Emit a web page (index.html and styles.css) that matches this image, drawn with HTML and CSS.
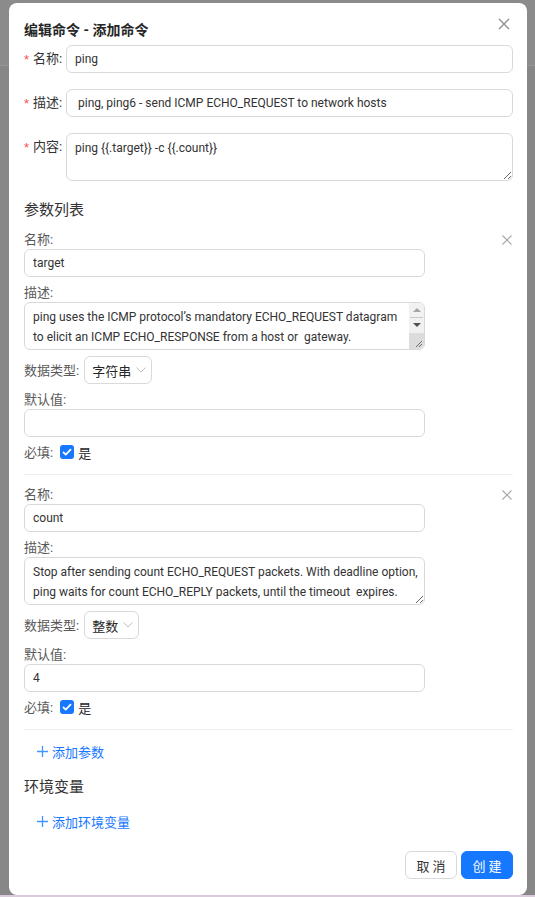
FILE: index.html
```html
<!DOCTYPE html>
<html lang="zh-CN">
<head>
<meta charset="utf-8">
<title>编辑命令 - 添加命令</title>
<link rel="stylesheet" href="styles.css">
</head>
<body>
<div class="modal">
  <button class="modal-close" aria-label="关闭">
    <svg width="12" height="12" viewBox="0 0 12 12"><path d="M1 1L11 11M11 1L1 11" stroke="#8c8c8c" stroke-width="1.3" fill="none"/></svg>
  </button>
  <div class="modal-title">编辑命令 - 添加命令</div>

  <div class="top-form">
    <label class="top-label"><span class="req">*</span>名称:</label>
    <input class="input" value="ping">
    <label class="top-label"><span class="req">*</span>描述:</label>
    <input class="input" value=" ping, ping6 - send ICMP ECHO_REQUEST to network hosts">
    <label class="top-label"><span class="req">*</span>内容:</label>
    <textarea class="textarea">ping {{.target}} -c {{.count}}</textarea>
  </div>

  <div class="section-title params-title">参数列表</div>

  <div class="param">
    <div class="param-fields">
      <div class="field-label">名称:</div>
      <input class="input" value="target">
      <div class="field-label">描述:</div>
      <div class="ta-wrap">
        <textarea class="textarea ta-scroll">ping uses the ICMP protocol’s mandatory ECHO_REQUEST datagram to elicit an ICMP ECHO_RESPONSE from a host or  gateway.</textarea>
        <div class="fake-scrollbar">
          <div class="sb-btn"><span class="tri-up"></span></div>
          <div class="sb-sep"></div>
          <div class="sb-btn"><span class="tri-down"></span></div>
          <div class="sb-corner">
            <svg width="10" height="10" viewBox="0 0 10 10"><path d="M9 3L3 9M9 6L6 9" stroke="#6f6f6f" stroke-width="1" fill="none"/></svg>
          </div>
        </div>
      </div>
      <div class="inline-row">
        <span class="field-label">数据类型:</span>
        <div class="select"><span>字符串</span>
          <svg width="10" height="6" viewBox="0 0 10 6"><path d="M0.5 0.5L5 5L9.5 0.5" stroke="#bfbfbf" stroke-width="1" fill="none"/></svg>
        </div>
      </div>
      <div class="field-label">默认值:</div>
      <input class="input" value="">
      <div class="inline-row check-row">
        <span class="field-label">必填:</span>
        <span class="checkbox"><svg width="10" height="8" viewBox="0 0 10 8"><path d="M1 4L3.8 6.6L9 1.2" stroke="#fff" stroke-width="1.8" fill="none"/></svg></span>
        <span class="check-text">是</span>
      </div>
    </div>
    <button class="param-remove" aria-label="删除">
      <svg width="10" height="10" viewBox="0 0 10 10"><path d="M0.5 0.5L9.5 9.5M9.5 0.5L0.5 9.5" stroke="#a6a6a6" stroke-width="1.1" fill="none"/></svg>
    </button>
  </div>

  <div class="divider"></div>

  <div class="param">
    <div class="param-fields">
      <div class="field-label">名称:</div>
      <input class="input" value="count">
      <div class="field-label">描述:</div>
      <textarea class="textarea ta-plain">Stop after sending count ECHO_REQUEST packets. With deadline option, ping waits for count ECHO_REPLY packets, until the timeout  expires.</textarea>
      <div class="inline-row">
        <span class="field-label">数据类型:</span>
        <div class="select"><span>整数</span>
          <svg width="10" height="6" viewBox="0 0 10 6"><path d="M0.5 0.5L5 5L9.5 0.5" stroke="#bfbfbf" stroke-width="1" fill="none"/></svg>
        </div>
      </div>
      <div class="field-label">默认值:</div>
      <input class="input" value="4">
      <div class="inline-row check-row">
        <span class="field-label">必填:</span>
        <span class="checkbox"><svg width="10" height="8" viewBox="0 0 10 8"><path d="M1 4L3.8 6.6L9 1.2" stroke="#fff" stroke-width="1.8" fill="none"/></svg></span>
        <span class="check-text">是</span>
      </div>
    </div>
    <button class="param-remove" aria-label="删除">
      <svg width="10" height="10" viewBox="0 0 10 10"><path d="M0.5 0.5L9.5 9.5M9.5 0.5L0.5 9.5" stroke="#a6a6a6" stroke-width="1.1" fill="none"/></svg>
    </button>
  </div>

  <div class="divider"></div>

  <button class="link-btn add-param">
    <svg width="11" height="11" viewBox="0 0 11 11"><path d="M5.5 0V11M0 5.5H11" stroke="#4096ff" stroke-width="1.3" fill="none"/></svg>
    <span>添加参数</span>
  </button>

  <div class="section-title env-title">环境变量</div>

  <button class="link-btn add-env">
    <svg width="11" height="11" viewBox="0 0 11 11"><path d="M5.5 0V11M0 5.5H11" stroke="#4096ff" stroke-width="1.3" fill="none"/></svg>
    <span>添加环境变量</span>
  </button>

  <div class="footer">
    <button class="btn btn-default">取 消</button>
    <button class="btn btn-primary">创 建</button>
  </div>
</div>
</body>
</html>
```
FILE: styles.css
```css
* { box-sizing: border-box; }

html, body {
  margin: 0;
  height: 897px;
  overflow: hidden;
}

body {
  background: linear-gradient(#8b8b8b 0 65px, #959595 65px 66px, #878787 66px 895px, #d9cbd9 895px);
  font-family: Roboto, "Noto Sans CJK SC", sans-serif;
  font-size: 13px;
  color: #333;
  padding-top: 3px;
}

button { font-family: inherit; }

.modal {
  position: relative;
  margin-left: 9px;
  width: 518px;
  height: 892px;
  background: #fff;
  border-radius: 8px;
  padding: 16px 14px 16px 15px;
}

.modal-close {
  position: absolute;
  top: 14px;
  right: 16px;
  width: 14px;
  height: 14px;
  padding: 1px;
  border: 0;
  background: none;
  display: flex;
}

.modal-title {
  font-size: 14px;
  font-weight: 700;
  line-height: 22px;
  height: 22px;
  color: #262626;
}

.top-form {
  margin-top: 4px;
  display: grid;
  grid-template-columns: 42px 1fr;
  grid-template-rows: 28px 28px 48px;
  column-gap: 0;
  row-gap: 16px;
}

.top-label {
  display: flex;
  align-items: center;
  height: 28px;
  line-height: 20px;
  color: #333;
  white-space: nowrap;
}

.req {
  color: #ff4d4f;
  margin-right: 4px;
  line-height: 1;
  font-family: "Liberation Sans", sans-serif;
}

.input {
  display: block;
  width: 100%;
  height: 28px;
  border: 1px solid #d9d9d9;
  border-radius: 6px;
  padding: 0 8px;
  font-family: inherit;
  font-size: 12px;
  color: #333;
  background: #fff;
  outline: none;
}

.textarea {
  display: block;
  width: 100%;
  height: 48px;
  border: 1px solid #d9d9d9;
  border-radius: 6px;
  padding: 4px 8px;
  font-family: inherit;
  font-size: 12px;
  line-height: 20px;
  color: #333;
  resize: vertical;
  outline: none;
}

.section-title {
  font-size: 15px;
  line-height: 24px;
  height: 24px;
  color: #333;
}

.params-title { margin-top: 17px; }

.param {
  display: flex;
  justify-content: space-between;
  align-items: flex-start;
  margin-top: 8px;
}

.param-fields {
  width: 401px;
  display: flex;
  flex-direction: column;
}

.field-label {
  line-height: 19px;
  height: 19px;
  color: #595959;
  white-space: nowrap;
}

.param-fields .input + .field-label,
.param-fields .ta-wrap + .inline-row,
.param-fields .textarea + .inline-row,
.param-fields .inline-row + .field-label {
  margin-top: 6px;
}

.param-fields .input + .inline-row {
  margin-top: 5px;
}

.ta-wrap { position: relative; }

.ta-scroll {
  resize: none;
  overflow: hidden;
  padding-right: 16px;
}

.ta-plain {
  padding-right: 4px;
  overflow: hidden;
}

.fake-scrollbar {
  position: absolute;
  top: 1px;
  right: 1px;
  bottom: 1px;
  width: 15px;
  background: #f1f1f1;
  border-radius: 0 5px 5px 0;
  display: flex;
  flex-direction: column;
  overflow: hidden;
}

.sb-btn {
  height: 14px;
  display: flex;
  align-items: center;
  justify-content: center;
}

.sb-sep {
  height: 1px;
  margin: 0 1px;
  background: #c8c8c8;
}

.tri-up {
  width: 0; height: 0;
  border-left: 4px solid transparent;
  border-right: 4px solid transparent;
  border-bottom: 4px solid #a3a3a3;
}

.tri-down {
  width: 0; height: 0;
  border-left: 4px solid transparent;
  border-right: 4px solid transparent;
  border-top: 4px solid #505050;
}

.sb-corner {
  margin-top: auto;
  height: 16px;
  background: #dcdcdc;
  display: flex;
  align-items: flex-end;
  justify-content: flex-end;
  padding: 0 1px 1px 0;
}

.inline-row {
  display: flex;
  align-items: center;
  height: 28px;
}

.select {
  margin-left: 5px;
  height: 28px;
  border: 1px solid #d9d9d9;
  border-radius: 6px;
  padding: 0 5px 0 7px;
  display: inline-flex;
  align-items: center;
  gap: 5px;
  color: #262626;
}

.check-row { height: 20px; }

.checkbox {
  margin-left: 7px;
  width: 14px;
  height: 14px;
  border-radius: 3px;
  background: #1677ff;
  display: inline-flex;
  align-items: center;
  justify-content: center;
}

.check-text {
  margin-left: 4px;
  color: #262626;
}

.param-remove {
  border: 0;
  background: none;
  padding: 0;
  margin-top: 5px;
  margin-right: 1px;
  width: 10px;
  height: 10px;
  display: flex;
}

.divider {
  height: 1px;
  background: #f0f0f0;
  margin-top: 12px;
}

.divider + .param { margin-top: 10px; }

.link-btn {
  display: flex;
  align-items: center;
  gap: 4px;
  height: 28px;
  border: 0;
  background: none;
  padding: 0 0 0 13px;
  color: #1677ff;
  font-size: 13px;
}

.add-param { margin-top: 7px; }
.env-title { margin-top: 10px; }
.add-env { margin-top: 8px; }

.footer {
  margin-top: 16px;
  display: flex;
  justify-content: flex-end;
  gap: 4px;
}

.btn {
  height: 28px;
  width: 52px;
  border-radius: 6px;
  font-size: 13px;
  padding: 0;
  display: flex;
  align-items: center;
  justify-content: center;
}

.btn-default {
  background: #fff;
  border: 1px solid #d9d9d9;
  color: #333;
}

.btn-primary {
  background: #1677ff;
  border: 1px solid #1677ff;
  color: #fff;
}
```
